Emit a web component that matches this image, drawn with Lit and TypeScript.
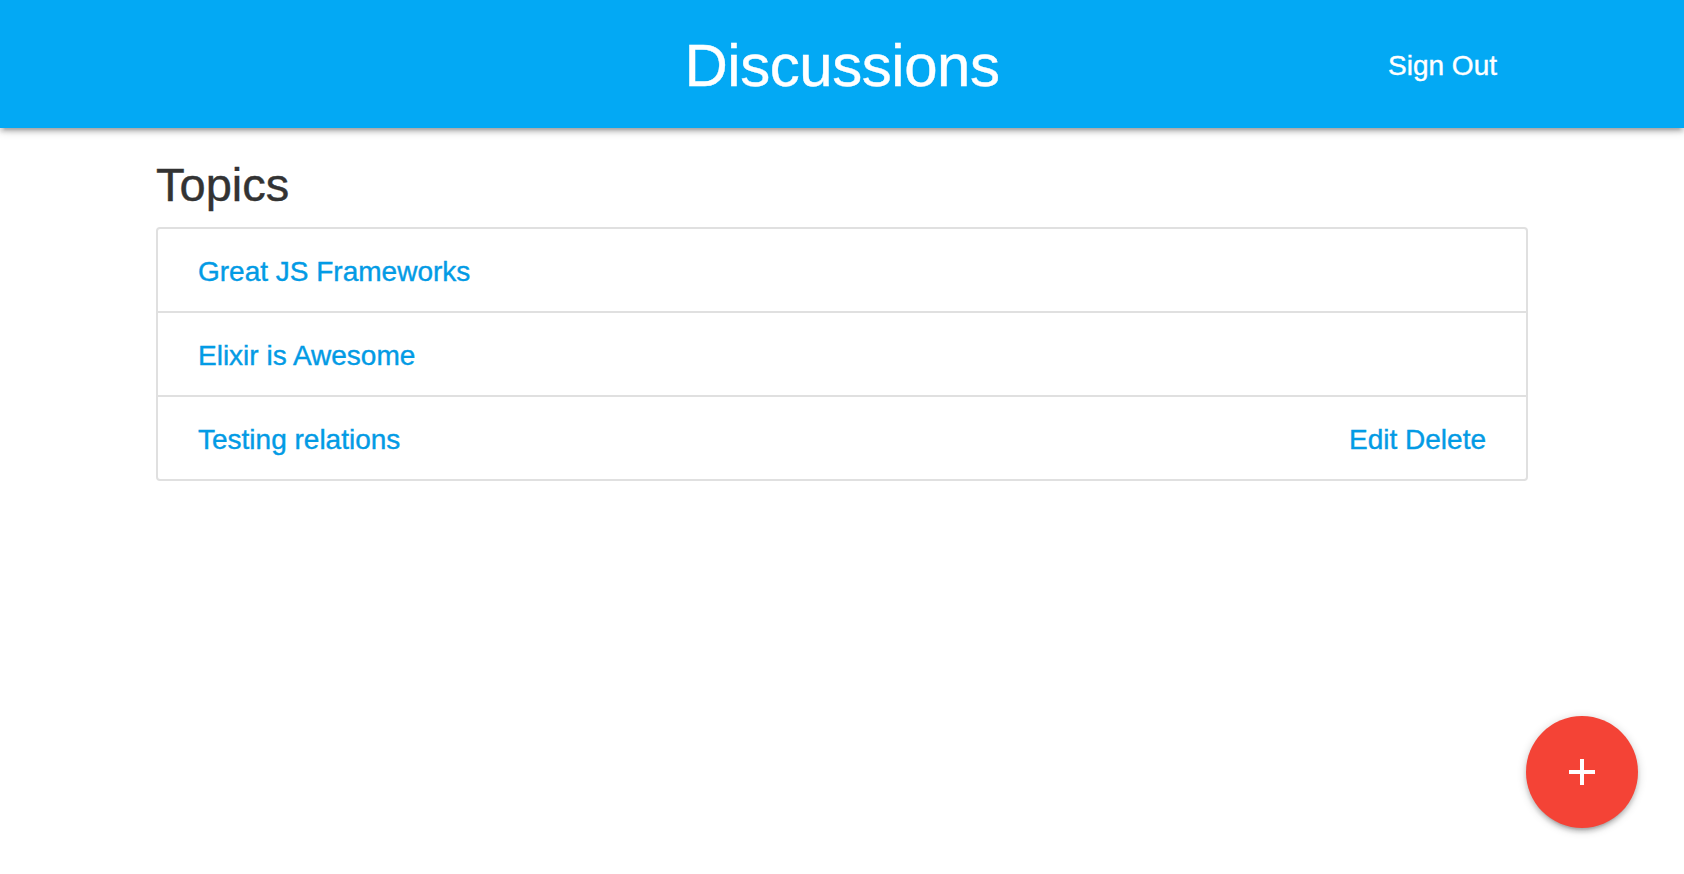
import { LitElement, html, css } from "lit";
import { customElement } from "lit/decorators.js";

interface Topic { title: string; owned: boolean; }

@customElement("app-root")
export class AppRoot extends LitElement {
  static styles = css`
    :host { display: block; min-height: 874px; background: #fff; font-family: "Liberation Sans", Arial, sans-serif; font-size: 28px; color: #333; -webkit-text-stroke: 0.4px currentColor; }
    * { box-sizing: border-box; }
    a { color: #039be5; text-decoration: none; white-space: nowrap; }
    nav { height: 128px; padding: 3px 156px 0; background: #03a9f4; display: grid; grid-template-columns: 1fr auto 1fr; align-items: center; box-shadow: 0 4px 4px 0 rgba(0,0,0,.14), 0 6px 2px -4px rgba(0,0,0,.12), 0 2px 10px 0 rgba(0,0,0,.2); }
    nav a { color: #fff; line-height: 125px; }
    .brand { grid-column: 2; font-size: 60px; letter-spacing: -0.45px; }
    .out { grid-column: 3; justify-self: end; padding-right: 31px; }
    main { padding: 27px 156px 0; }
    h5 { margin: 0; font-size: 47px; font-weight: 400; line-height: 60px; padding-bottom: 12px; }
    ul { list-style: none; margin: 0; padding: 0; border: 2px solid #e0e0e0; border-radius: 4px; overflow: hidden; }
    li { height: 84px; padding: 3px 40px 0; display: flex; justify-content: space-between; align-items: center; border-bottom: 2px solid #e0e0e0; }
    li:last-child { border-bottom: 0; height: 82px; }
    .fab { position: fixed; right: 46px; bottom: 46px; width: 112px; height: 112px; border-radius: 50%; background: #f44336; display: flex; align-items: center; justify-content: center; box-shadow: 0 4px 4px 0 rgba(0,0,0,.14), 0 6px 2px -4px rgba(0,0,0,.12), 0 2px 10px 0 rgba(0,0,0,.2); }
    .fab svg { width: 26px; height: 26px; fill: #fff; display: block; }
  `;
  private topics: Topic[] = [
    { title: "Great JS Frameworks", owned: false },
    { title: "Elixir is Awesome", owned: false },
    { title: "Testing relations", owned: true },
  ];
  render() {
    return html`
      <nav><a class="brand" href="#">Discussions</a><a class="out" href="#">Sign Out</a></nav>
      <main>
        <h5>Topics</h5>
        <ul>${this.topics.map((t) => html`<li><a href="#">${t.title}</a>${t.owned ? html`<div class="actions"><a href="#">Edit</a> <a href="#">Delete</a></div>` : ""}</li>`)}</ul>
      </main>
      <a class="fab" href="#" aria-label="Add topic"><svg viewBox="0 0 26 26" stroke="none"><path d="M11 0h4v11h11v4H15v11h-4V15H0v-4h11z"/></svg></a>`;
  }
}
